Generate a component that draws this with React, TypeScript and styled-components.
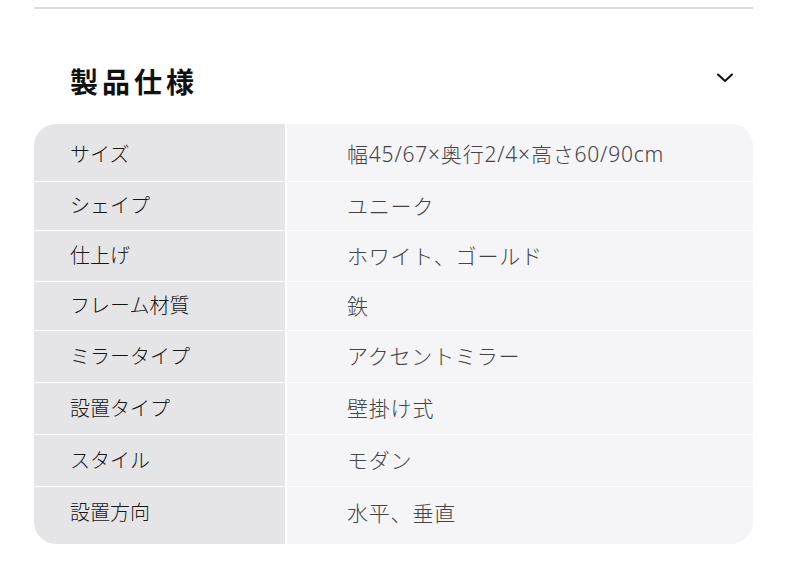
import React from "react";
import styled, { createGlobalStyle } from "styled-components";

const Global = createGlobalStyle`
  html, body { margin: 0; padding: 0; background: #fff; }
  body { font-family: "Noto Sans", "Noto Sans CJK JP", sans-serif; }
`;

const Page = styled.div`
  width: 719px;
  margin-left: 34px;
  padding-top: 7px;
`;

const Rule = styled.div`
  height: 2px;
  background: #dcdcdc;
`;

const Header = styled.div`
  display: flex;
  align-items: center;
  justify-content: space-between;
  height: 75px;
  margin-top: 34px;
  padding: 0 19px 0 36px;
`;

const Title = styled.h2`
  margin: 0;
  font-family: "Noto Sans CJK JP", sans-serif;
  font-size: 28px;
  font-weight: 700;
  letter-spacing: 4px;
  color: #111;
  line-height: 1;
`;

const Chevron = styled.svg`
  width: 18px;
  height: 18px;
  margin-top: -6px;
`;

const Table = styled.div`
  display: grid;
  grid-template-columns: 251px 1fr;
  column-gap: 2px;
  row-gap: 1px;
  background: #fff;
  border-radius: 22px;
  overflow: hidden;
  margin-top: 6px;
`;

const Cell = styled.div<{ $label?: boolean; $h: number; $pt: number; $pb: number }>`
  height: ${(p) => p.$h}px;
  display: flex;
  align-items: center;
  box-sizing: border-box;
  padding: ${(p) => p.$pt}px 0 ${(p) => p.$pb}px ${(p) => (p.$label ? 36 : 60)}px;
  background: ${(p) => (p.$label ? "#e5e5e7" : "#f5f5f7")};
  color: ${(p) => (p.$label ? "#161616" : "#444444")};
  font-size: ${(p) => (p.$label ? 20 : 21)}px;
  font-weight: 300;
  letter-spacing: ${(p) => (p.$label ? 0 : 0.8)}px;
  line-height: 1;
`;

const rows: [string, string][] = [
  ["サイズ", "幅45/67×奥行2/4×高さ60/90cm"],
  ["シェイプ", "ユニーク"],
  ["仕上げ", "ホワイト、ゴールド"],
  ["フレーム材質", "鉄"],
  ["ミラータイプ", "アクセントミラー"],
  ["設置タイプ", "壁掛け式"],
  ["スタイル", "モダン"],
  ["設置方向", "水平、垂直"],
];

const heights = [57, 48, 50, 48, 51, 51, 51, 57];

export default function App() {
  return (
    <>
      <Global />
      <Page>
        <Rule />
        <Header>
          <Title>製品仕様</Title>
          <Chevron viewBox="0 0 18 18" fill="none">
            <path d="M2 5.5 L9 12 L16 5.5" stroke="#111" strokeWidth="2" strokeLinecap="round" strokeLinejoin="round" />
          </Chevron>
        </Header>
        <Table>
          {rows.map(([k, v], i) => {
            const pt = i === 0 ? 4 : 0;
            const pb = i === rows.length - 1 ? 5 : 0;
            return (
              <React.Fragment key={k}>
                <Cell $label $h={heights[i]} $pt={pt} $pb={pb}>{k}</Cell>
                <Cell $h={heights[i]} $pt={pt} $pb={pb}>{v}</Cell>
              </React.Fragment>
            );
          })}
        </Table>
      </Page>
    </>
  );
}
